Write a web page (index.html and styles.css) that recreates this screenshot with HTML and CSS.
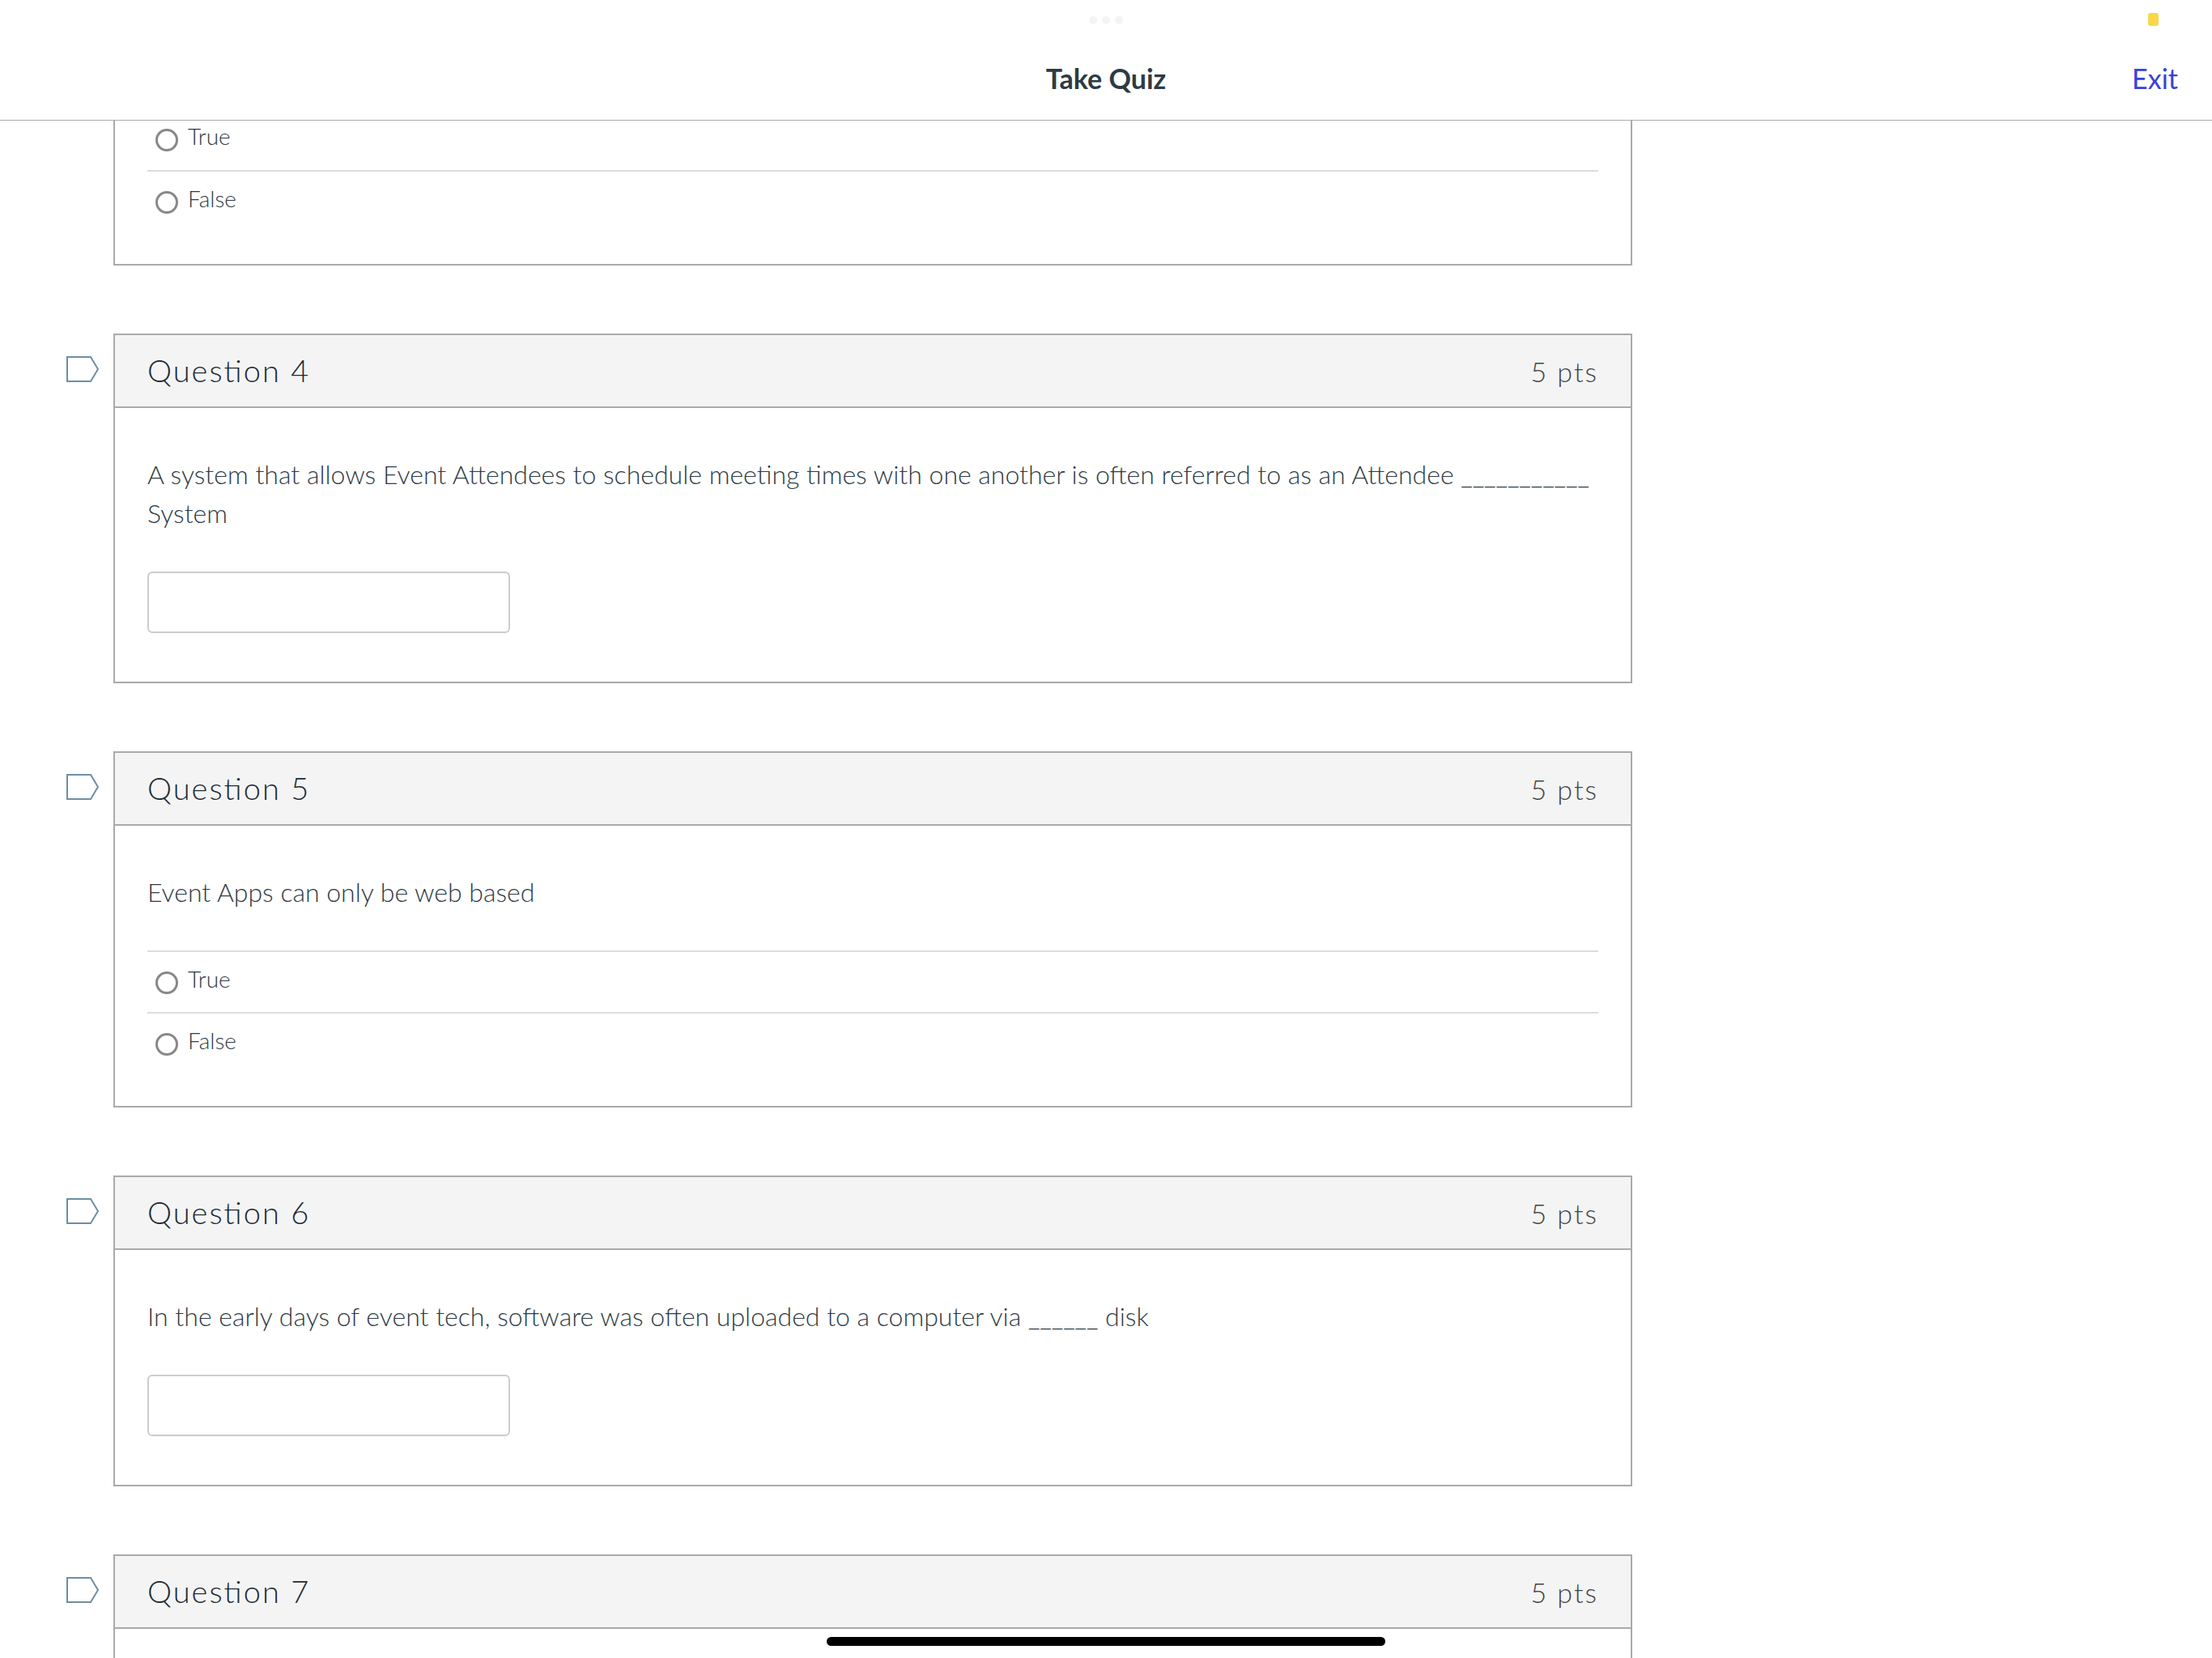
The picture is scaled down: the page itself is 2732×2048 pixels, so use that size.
FILE: index.html
```html
<!DOCTYPE html>
<html lang="en">
<head>
    <meta charset="UTF-8">
    <meta name="viewport" content="width=device-width, initial-scale=1.0">
    <title>Take Quiz</title>
    <link rel="stylesheet" href="styles.css">
</head>
<body>
    <header class="topbar">
        <div class="status">
            <div class="dots"><span></span><span></span><span></span></div>
            <span class="indicator"></span>
        </div>
        <div class="nav">
            <h1>Take Quiz</h1>
            <a class="exit" href="#">Exit</a>
        </div>
    </header>

    <main class="quiz">
        <section class="question">
            <div class="card continued">
                <div class="answers">
                    <label class="answer"><input type="radio" name="q3"><span>True</span></label>
                    <label class="answer"><input type="radio" name="q3"><span>False</span></label>
                </div>
            </div>
        </section>

        <section class="question">
            <button class="flag" type="button" aria-label="Flag question 4">
                <svg viewBox="0 0 40 32"><path d="M1 1H30L39 16L30 31H1Z"/></svg>
            </button>
            <div class="card">
                <div class="card-header">
                    <h2>Question 4</h2>
                    <span class="points">5 pts</span>
                </div>
                <div class="card-body">
                    <p id="q4-text">A system that allows Event Attendees to schedule meeting times with one another is often referred to as an Attendee ___________ System</p>
                    <input class="blank" type="text" aria-labelledby="q4-text">
                </div>
            </div>
        </section>

        <section class="question">
            <button class="flag" type="button" aria-label="Flag question 5">
                <svg viewBox="0 0 40 32"><path d="M1 1H30L39 16L30 31H1Z"/></svg>
            </button>
            <div class="card">
                <div class="card-header">
                    <h2>Question 5</h2>
                    <span class="points">5 pts</span>
                </div>
                <div class="card-body">
                    <p>Event Apps can only be web based</p>
                </div>
                <div class="answers">
                    <label class="answer"><input type="radio" name="q5"><span>True</span></label>
                    <label class="answer"><input type="radio" name="q5"><span>False</span></label>
                </div>
            </div>
        </section>

        <section class="question">
            <button class="flag" type="button" aria-label="Flag question 6">
                <svg viewBox="0 0 40 32"><path d="M1 1H30L39 16L30 31H1Z"/></svg>
            </button>
            <div class="card">
                <div class="card-header">
                    <h2>Question 6</h2>
                    <span class="points">5 pts</span>
                </div>
                <div class="card-body">
                    <p id="q6-text">In the early days of event tech, software was often uploaded to a computer via ______ disk</p>
                    <input class="blank" type="text" aria-labelledby="q6-text">
                </div>
            </div>
        </section>

        <section class="question">
            <button class="flag" type="button" aria-label="Flag question 7">
                <svg viewBox="0 0 40 32"><path d="M1 1H30L39 16L30 31H1Z"/></svg>
            </button>
            <div class="card">
                <div class="card-header">
                    <h2>Question 7</h2>
                    <span class="points">5 pts</span>
                </div>
                <div class="card-body"></div>
            </div>
        </section>
    </main>

    <div class="home-bar"></div>
</body>
</html>
```
FILE: styles.css
```css
* {
    box-sizing: border-box;
}
body {
    margin: 0;
    height: 100vh;
    overflow: hidden;
    background: #fff;
    color: #2d3b45;
    font-family: Lato, "Liberation Sans", sans-serif;
    font-size: 32px;
    font-weight: 300;
    line-height: 48px;
}
h1, h2, p {
    margin: 0;
}

/* top bar */
.topbar {
    position: fixed;
    top: 0;
    left: 0;
    right: 0;
    z-index: 1;
    background: #fff;
    border-bottom: 1px solid #aaa;
}
.status {
    display: grid;
    grid-template-columns: 1fr auto 1fr;
    align-items: center;
    height: 48px;
    padding: 0 66px;
}
.dots {
    grid-column: 2;
    display: flex;
    gap: 6px;
    padding-top: 2px;
}
.dots span {
    width: 10px;
    height: 10px;
    border-radius: 50%;
    background: #f4f4f4;
}
.indicator {
    justify-self: end;
    width: 13px;
    height: 16px;
    border-radius: 3px;
    background: #f9d749;
}
.nav {
    display: grid;
    grid-template-columns: 1fr auto 1fr;
    align-items: center;
    height: 100px;
    padding: 0 42px 2px;
}
.nav h1 {
    grid-column: 2;
    font-size: 34px;
    font-weight: 700;
}
.exit {
    justify-self: end;
    color: #3742d9;
    font-size: 34px;
    font-weight: 400;
    text-decoration: none;
}

/* questions */
.quiz {
    display: flex;
    flex-direction: column;
    gap: 84px;
    padding: 134px 716px 0 82px;
}
.question {
    display: grid;
    grid-template-columns: 40px 1fr;
    column-gap: 18px;
    align-items: start;
}
.flag {
    width: 40px;
    height: 32px;
    margin-top: 28px;
    padding: 0;
    border: 0;
    background: none;
}
.flag svg {
    display: block;
    fill: none;
    stroke: #6d8ea6;
    stroke-width: 2;
}
.card {
    grid-column: 2;
    border: 2px solid #aaa;
}
.continued {
    border-top: 0;
}
.continued .answer:first-child {
    border-top: 0;
}
.card-header {
    display: flex;
    justify-content: space-between;
    align-items: baseline;
    height: 90px;
    padding: 19px 40px;
    background: #f4f4f4;
    border-bottom: 2px solid #aaa;
    letter-spacing: 2px;
    font-feature-settings: "liga" 1;
}
.card-header h2 {
    color: #1c2a34;
    font-size: 38px;
    font-weight: 300;
}
.points {
    color: #444;
    font-size: 34px;
}
.card-body {
    padding: 58px 40px 60px;
}
.card-body p + .blank {
    margin-top: 48px;
}
.blank {
    display: block;
    width: 448px;
    height: 76px;
    padding: 8px 16px;
    border: 2px solid #ccc;
    border-radius: 6px;
    font: inherit;
}
.answers {
    padding: 0 40px 40px;
}
.card-body + .answers {
    margin-top: -12px;
}
.answer {
    display: flex;
    align-items: center;
    gap: 12px;
    height: 76px;
    padding: 0 10px;
    border-top: 2px solid #ddd;
    font-size: 28px;
    line-height: 40px;
}
.answer span {
    padding-bottom: 8px;
}
.answer input {
    appearance: none;
    width: 28px;
    height: 28px;
    margin: 2px 0 0;
    border: 3px solid #888;
    border-radius: 50%;
    background: #fff;
}

.home-bar {
    position: fixed;
    bottom: 15px;
    left: 50%;
    z-index: 1;
    width: 690px;
    height: 11px;
    margin-left: -345px;
    border-radius: 6px;
    background: #000;
}
```
